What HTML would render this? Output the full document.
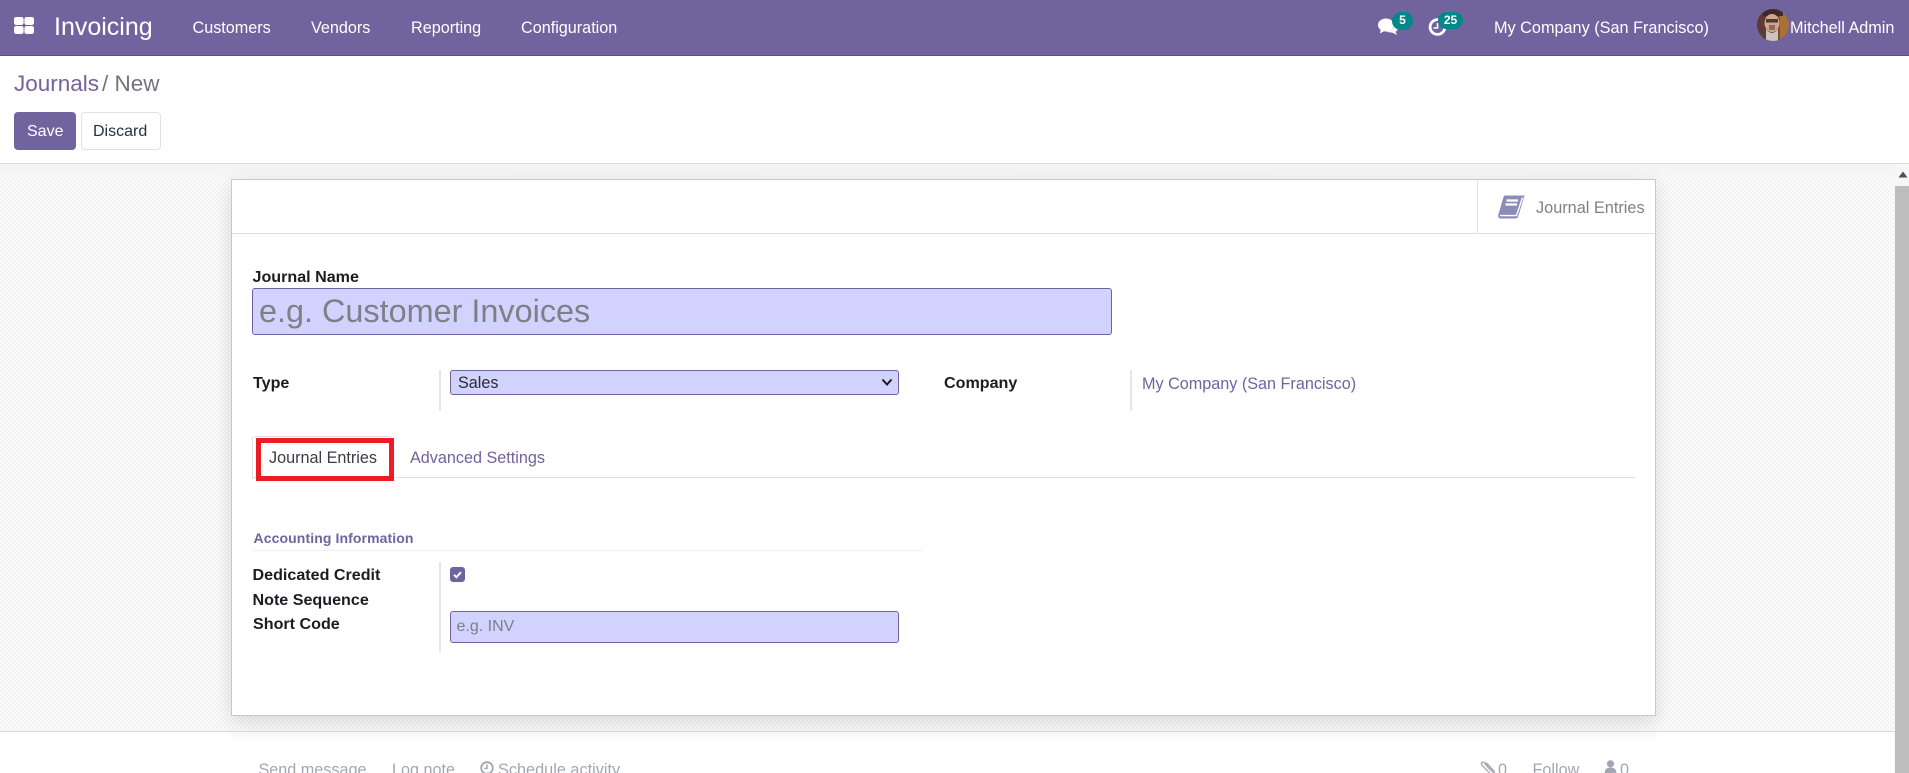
<!DOCTYPE html>
<html lang="en"><head><meta charset="utf-8"><title>Journals / New</title>
<style>
html,body{margin:0;padding:0;width:1909px;height:773px;overflow:hidden;background:#fff}
body{position:relative;font-family:"Liberation Sans",sans-serif;font-size:16px;color:#212529}
.a{position:absolute}
.t{position:absolute;white-space:nowrap;line-height:20px;height:20px}
.b{font-weight:bold;color:#1c1c22}
.nav{left:0;top:0;width:1909px;height:55px;background:#71639e;border-bottom:1px solid #5b4f83}
.n{color:#fff}
.sheetbg{left:0;top:164px;width:1894px;height:567px;background:repeating-conic-gradient(#f3f3f3 0 25%,#fcfcfc 0 50%) 0 0/4px 4px}
.topsh{left:0;top:164px;width:1894px;height:16px;background:linear-gradient(#f3f3f3,rgba(248,248,248,.7))}
.card{left:231px;top:179px;width:1423px;height:535px;background:#fff;border:1px solid #c9c6d6;box-shadow:0 6px 20px rgba(0,0,0,.13)}
.in{background:#d2d2ff;border:1px solid #71639e;border-radius:3px;box-sizing:border-box}
.sep{width:2px;background:#e6e6e6}
.ph{color:#7f7f88}
.p{color:#71639e}
.g{color:#a3a6b2}
</style></head><body>

<div class="a sheetbg"></div>
<div class="a topsh"></div>
<div class="a" style="left:0;top:163px;width:1909px;height:1px;background:#dcdcdf"></div>

<div class="a card"></div>
<div class="a" style="left:232px;top:233px;width:1422px;height:1px;background:#dfdfe3"></div>
<div class="a" style="left:1477px;top:180px;width:1px;height:53px;background:#e2e2e5"></div>
<svg class="a" style="left:1497px;top:194px" width="29" height="26" viewBox="0 0 29 26">
<path d="M7 1.5H27.5L21.5 21.5Q21 24.5 18 24.5H3.5Q0.8 24.5 1.2 21Z" fill="#8c8cb8"/>
<path d="M3 21.6H19.5L25.5 3.5" fill="none" stroke="#fff" stroke-width="1.4"/>
<path d="M9.5 6.5H21M8.5 10.5H20" stroke="#fff" stroke-width="2.2"/>
</svg>
<div class="t" style="left:1536px;top:198px;color:#80808a;font-size:16.3px">Journal Entries</div>

<div class="t b" style="left:252.5px;top:267px;font-size:16.1px">Journal Name</div>
<div class="a in" style="left:252px;top:288px;width:860px;height:47px"></div>
<div class="t ph" style="left:259px;top:300px;font-size:32.4px;line-height:22px;height:22px">e.g. Customer Invoices</div>

<div class="t b" style="left:253px;top:373px;font-size:16.1px">Type</div>
<div class="a sep" style="left:439px;top:370px;height:41px"></div>
<div class="a in" style="left:450px;top:370px;width:449px;height:25px"></div>
<div class="t" style="left:458px;top:373px;font-size:16.2px;color:#2b2b33">Sales</div>
<svg class="a" style="left:881px;top:378px" width="12" height="9" viewBox="0 0 12 9"><path d="M1.5 1.5L6 6.5L10.5 1.5" fill="none" stroke="#1c1c22" stroke-width="2"/></svg>

<div class="t b" style="left:944px;top:373px;font-size:16.1px">Company</div>
<div class="a sep" style="left:1130px;top:370px;height:41px"></div>
<div class="t p" style="left:1142px;top:374px;font-size:16.2px">My Company (San Francisco)</div>

<div class="a" style="left:252px;top:477px;width:1383px;height:1px;background:#dfdfe3"></div>
<div class="a" style="left:252px;top:436px;width:140px;height:41px;border:1px solid #dfdfe3;border-bottom:0;border-radius:3px 3px 0 0;box-sizing:border-box"></div>
<div class="t" style="left:269px;top:448px;font-size:16.2px;color:#3c3c46">Journal Entries</div>
<div class="a" style="left:256px;top:438px;width:138px;height:43px;border:5px solid #ed1c24;box-sizing:border-box"></div>
<div class="t p" style="left:410px;top:448px;font-size:16.2px">Advanced Settings</div>

<div class="t" style="left:253.5px;top:528px;font-size:14px;font-weight:bold;color:#71639e;letter-spacing:.1px">Accounting Information</div>
<div class="a" style="left:253px;top:550px;width:669px;height:1px;background:#efefef"></div>

<div class="t b" style="left:252.5px;top:565px;font-size:16.1px">Dedicated Credit</div>
<div class="t b" style="left:252.5px;top:590px;font-size:16.1px">Note Sequence</div>
<div class="t b" style="left:253px;top:614px;font-size:16.1px">Short Code</div>
<div class="a sep" style="left:439px;top:562px;height:90px"></div>
<div class="a" style="left:450px;top:567px;width:15px;height:15px;background:#71639e;border-radius:3px"></div>
<svg class="a" style="left:450px;top:567px" width="15" height="15" viewBox="0 0 15 15"><path d="M4 7.8L6.4 10.2L11 5.2" fill="none" stroke="#fff" stroke-width="1.9"/></svg>
<div class="a in" style="left:450px;top:611px;width:449px;height:32px"></div>
<div class="t ph" style="left:456.5px;top:617px;font-size:16px">e.g. INV</div>

<!-- chatter -->
<div class="a" style="left:0;top:731px;width:1894px;height:1px;background:#d8d8dc"></div>
<div class="a" style="left:231px;top:732px;width:1424px;height:12px;background:linear-gradient(#f6f6f6,#fff)"></div>
<div class="t g" style="left:258.5px;top:760px;font-size:16.2px">Send message</div>
<div class="t g" style="left:392px;top:760px;font-size:16.2px">Log note</div>
<svg class="a" style="left:480px;top:761px" width="14" height="14" viewBox="0 0 14 14"><circle cx="7" cy="7" r="5.8" fill="none" stroke="#a3a6b2" stroke-width="1.8"/><path d="M7 3.4V7.4H4.2" fill="none" stroke="#a3a6b2" stroke-width="1.4"/></svg>
<div class="t g" style="left:498px;top:760px;font-size:16.3px">Schedule activity</div>
<svg class="a" style="left:1480px;top:760px" width="16" height="15" viewBox="0 0 16 15"><path d="M14 13L4.5 2.8C2.5 1 .3 3.2 2 5.2L10.5 14C13 15.5 15.5 13 13.5 10.6L7 3.5C6 2.5 4.8 3.5 5.8 4.8L11.5 11" fill="none" stroke="#a9acb8" stroke-width="1.4"/></svg>
<div class="t g" style="left:1498px;top:760px;font-size:16.2px">0</div>
<div class="t g" style="left:1532.5px;top:760px;font-size:16.2px">Follow</div>
<svg class="a" style="left:1604px;top:760px" width="13" height="14" viewBox="0 0 13 14"><circle cx="6.5" cy="3.8" r="3.6" fill="#a3a6b2"/><path d="M0.5 14C0.5 9 3 7.5 6.5 7.5S12.5 9 12.5 14Z" fill="#a3a6b2"/></svg>
<div class="t g" style="left:1620px;top:760px;font-size:16.2px">0</div>

<!-- scrollbar -->
<div class="a" style="left:1894px;top:164px;width:15px;height:609px;background:#f6f6f6"></div>
<div class="a" style="left:1895px;top:186px;width:14px;height:587px;background:#bdbdbd"></div>
<svg class="a" style="left:1898px;top:171px" width="10" height="7" viewBox="0 0 10 7"><path d="M5 .5L9.5 6.5H.5Z" fill="#4f4a66"/></svg>

<!-- control panel -->
<div class="t p" style="left:14px;top:74px;font-size:22.5px">Journals</div>
<div class="t" style="left:102px;top:74px;font-size:22.5px;color:#74747e">/ New</div>
<div class="a" style="left:14px;top:112px;width:62px;height:38px;background:#71639e;border-radius:4px"></div>
<div class="t" style="left:27px;top:122px;color:#fff;font-size:16px">Save</div>
<div class="a" style="left:81px;top:112px;width:80px;height:38px;background:#fff;border:1px solid #dee2e6;border-radius:4px;box-sizing:border-box"></div>
<div class="t" style="left:93px;top:122px;color:#24323f;font-size:16px">Discard</div>

<!-- navbar -->
<div class="a nav"></div>
<svg class="a" style="left:14px;top:17px" width="20" height="17" viewBox="0 0 20 17" fill="#fff">
<rect x="0" y="0" width="9.6" height="8" rx="2.2"/><rect x="10.4" y="0" width="9.6" height="8" rx="2.2"/><rect x="0" y="9" width="9.6" height="8" rx="2.2"/><rect x="10.4" y="9" width="9.6" height="8" rx="2.2"/></svg>
<div class="t n" style="left:54px;top:17px;font-size:25px">Invoicing</div>
<div class="t n" style="left:192.5px;top:18px;font-size:16.2px">Customers</div>
<div class="t n" style="left:311px;top:18px;font-size:16.2px">Vendors</div>
<div class="t n" style="left:411px;top:18px;font-size:16.2px">Reporting</div>
<div class="t n" style="left:521px;top:18px;font-size:16.2px">Configuration</div>

<svg class="a" style="left:1378px;top:18px" width="21" height="18" viewBox="0 0 21 18" fill="#fff">
<ellipse cx="8" cy="7" rx="8" ry="6.5"/><path d="M3 10L2 15.5L8 12Z"/><path d="M16.5 5C19 6 20.5 8 20 10.5C19.8 12 18.8 13 17.5 13.7L19 17L14 14.5C12 14.6 10 14.2 8.5 13.6C13 13.5 17 10.5 16.5 5Z"/></svg>
<div class="a" style="left:1392px;top:12px;width:21px;height:18px;border-radius:9px;background:#00878a;color:#fff;font-size:12px;font-weight:bold;line-height:17px;text-align:center">5</div>

<svg class="a" style="left:1428px;top:18px" width="19" height="18" viewBox="0 0 19 18"><circle cx="9.5" cy="9" r="7.4" fill="none" stroke="#fff" stroke-width="2.8"/><path d="M9.5 5V10H5.5" fill="none" stroke="#fff" stroke-width="1.6"/></svg>
<div class="a" style="left:1438px;top:12px;width:25px;height:17px;border-radius:8.5px;background:#00878a;color:#fff;font-size:12px;font-weight:bold;line-height:16px;text-align:center">25</div>

<div class="t n" style="left:1494px;top:18px;font-size:16.25px">My Company (San Francisco)</div>

<svg class="a" style="left:1757px;top:9px" width="32" height="32" viewBox="0 0 32 32">
<defs><clipPath id="c"><circle cx="16" cy="16" r="16"/></clipPath></defs>
<g clip-path="url(#c)">
<rect width="32" height="32" fill="#7a4f3a"/>
<rect x="0" y="0" width="9" height="32" fill="#5d3a34"/>
<rect x="23" y="0" width="9" height="32" fill="#a8713a"/>
<rect x="6" y="0" width="20" height="7" fill="#3d2a2a"/>
<ellipse cx="15" cy="14" rx="7.5" ry="9" fill="#d2a68c"/>
<rect x="9" y="10" width="12" height="3.5" fill="#4a3a38"/>
<path d="M9 20Q15 28 21 20V32H9Z" fill="#cfc4bd"/>
<rect x="12" y="16" width="6" height="5" fill="#8f6a5a"/>
</g></svg>
<div class="t n" style="left:1790px;top:18px;font-size:16.2px">Mitchell Admin</div>

</body></html>
